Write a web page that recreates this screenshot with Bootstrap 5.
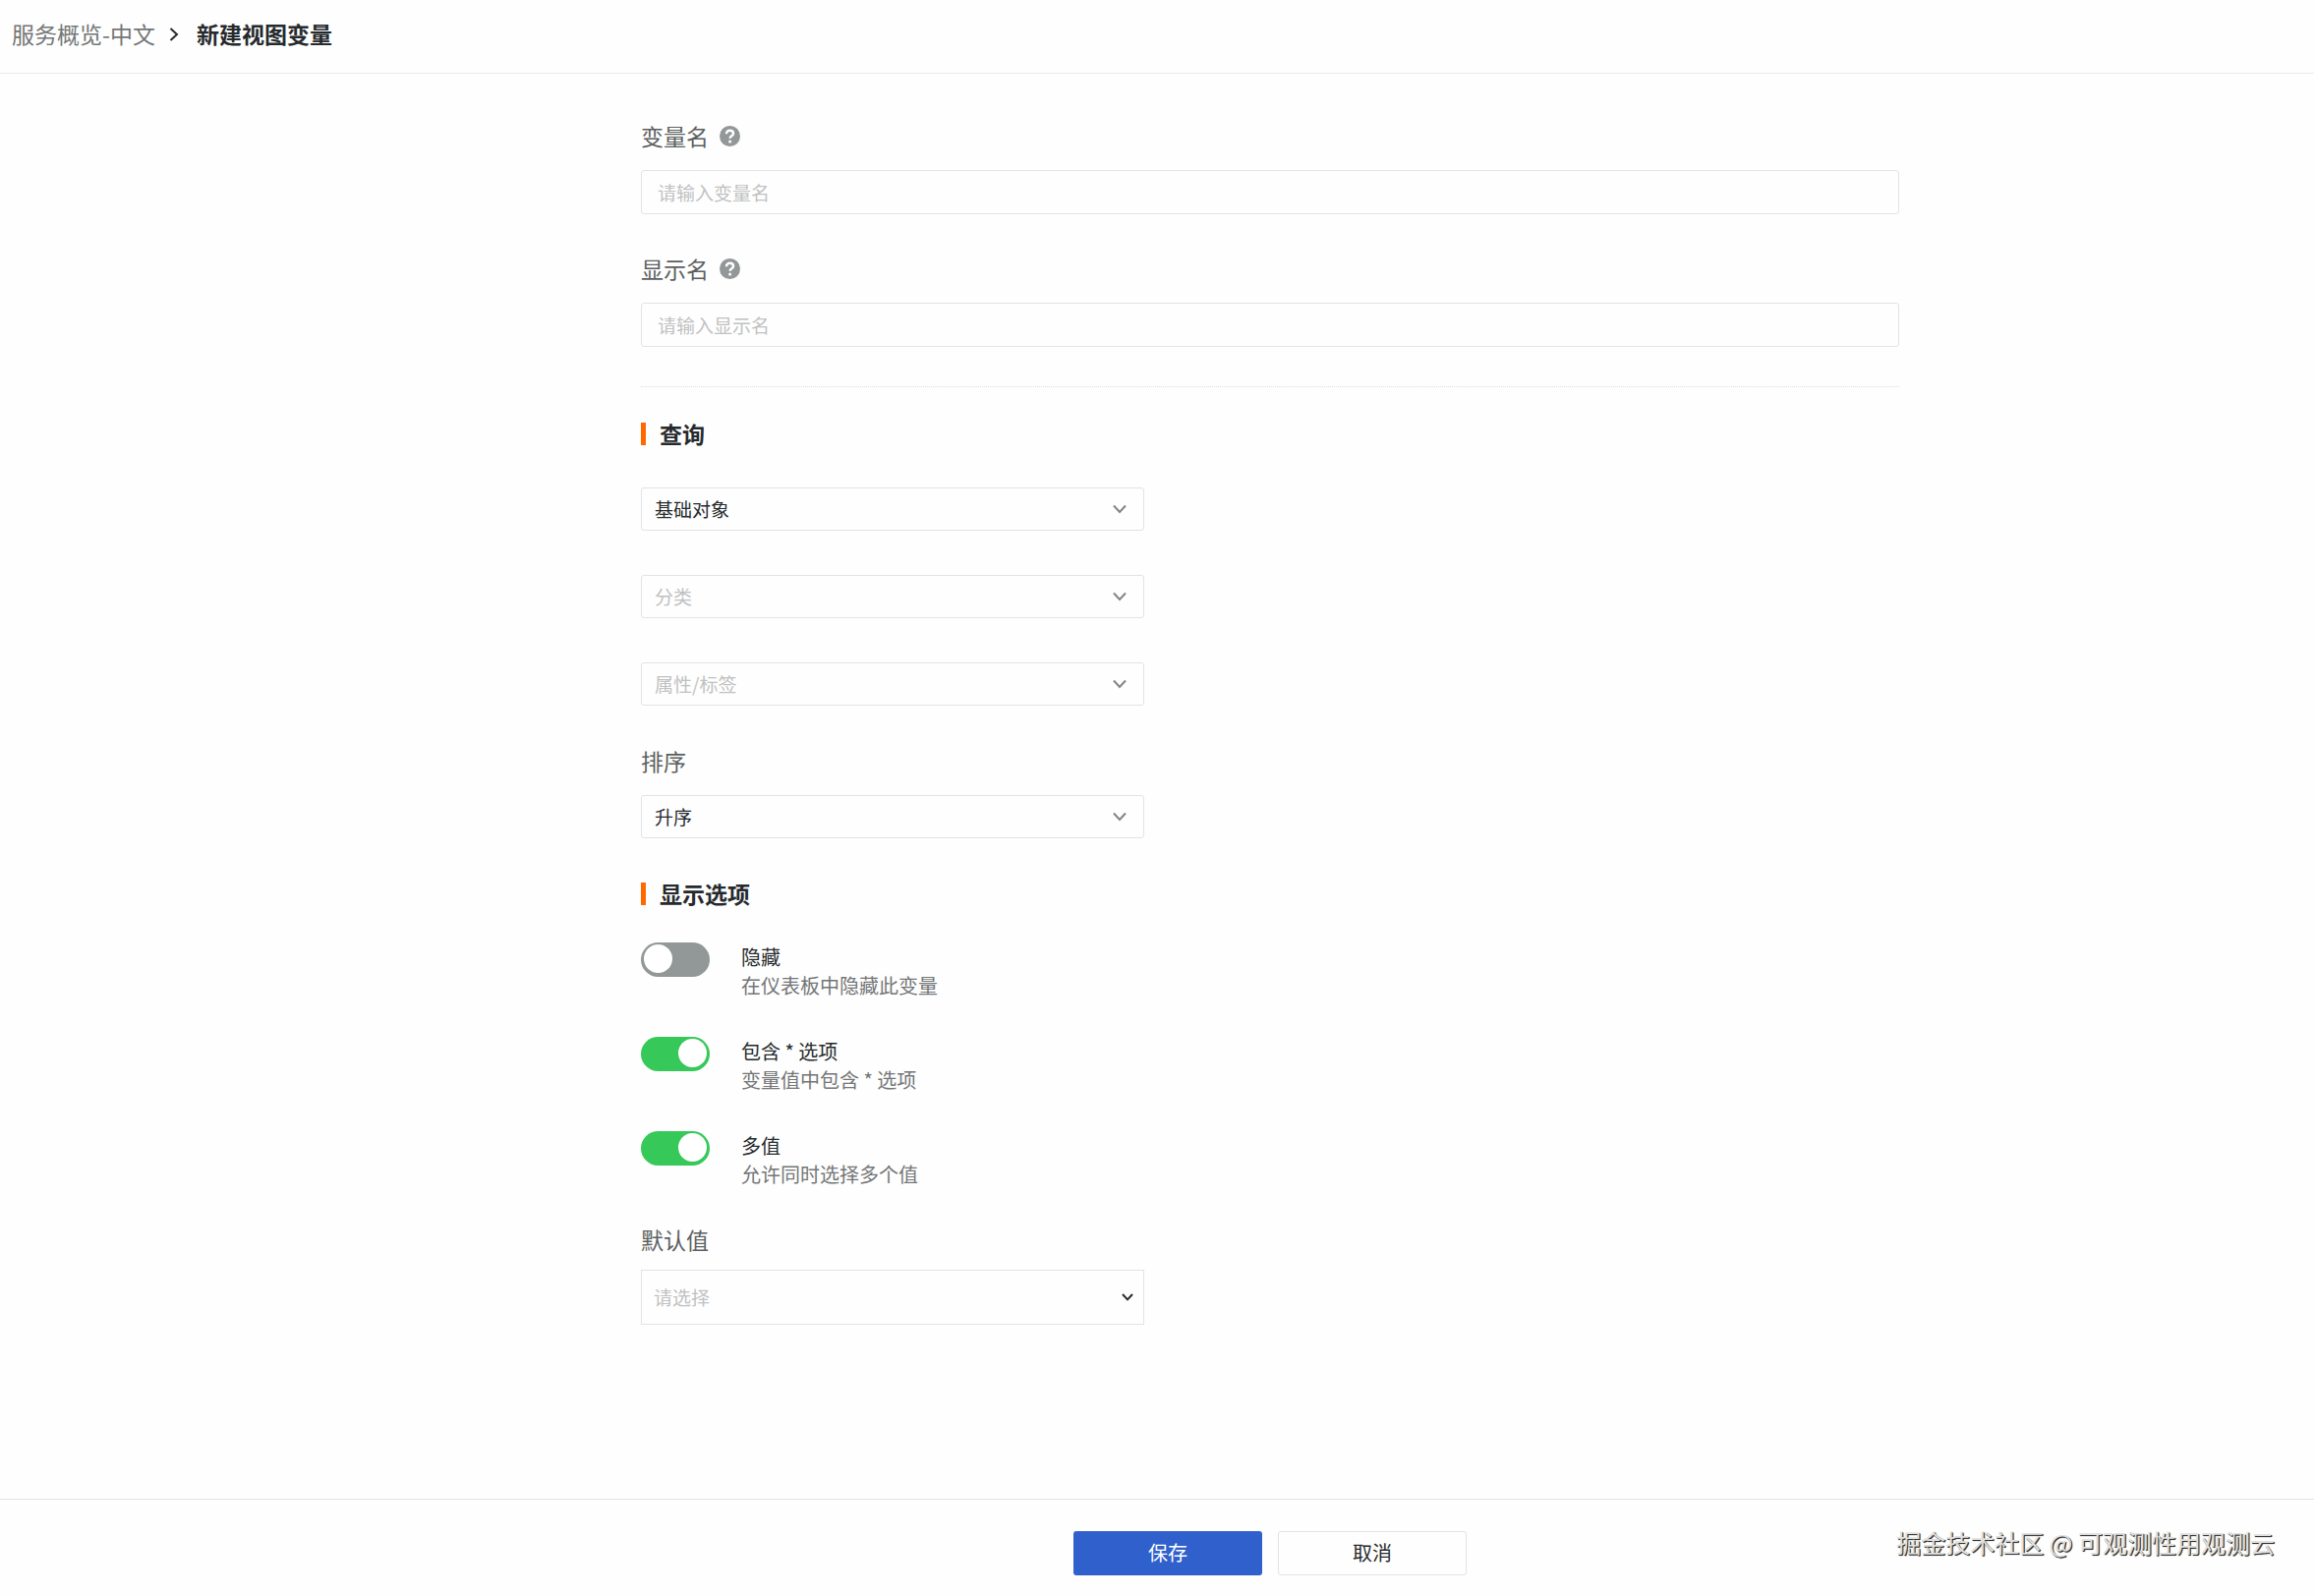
<!DOCTYPE html>
<html lang="zh-CN">
<head>
<meta charset="utf-8">
<meta name="viewport" content="width=device-width, initial-scale=1">
<title>新建视图变量</title>
<link href="https://cdn.jsdelivr.net/npm/bootstrap@5.3.0/dist/css/bootstrap.min.css" rel="stylesheet">
<style>
  :root {
    --ink: #262a2d;
    --label: #5c5f60;
    --muted: #747677;
    --hint: #c0c1c1;
    --line: #e2e3e3;
    --accent: #ff6a00;
  }
  body { font-family: "Noto Sans CJK SC", "Liberation Sans", sans-serif; font-size: 19px; line-height: 29px; color: var(--ink); background: #fefefe; }
  .topbar { height: 75px; padding: 0 12px 6px; border-bottom: 1px solid #ececec; font-size: 23px; }
  .topbar a { color: var(--muted); }
  .topbar h1 { font-size: 23px; line-height: 30px; }
  .crumb-arrow { width: 10px; height: 14px; margin: 2px 18px 0 14px; }
  .shell { padding-left: 230px; }
  .editor { max-width: 1280px; padding-top: 48px; padding-bottom: 40px; }
  .field { margin-bottom: 40px; }
  .field.half { margin-bottom: 41px; }
  .field-label { font-size: 23px; line-height: 30px; color: var(--label); margin-bottom: 20px; }
  .help-icon { width: 21px; height: 21px; margin-left: 11px; }
  .editor .form-control, .editor .form-select { font-size: 19px; line-height: 29px; border: 1px solid var(--line); border-radius: 3px; color: var(--ink); background-color: transparent; }
  .editor .form-control { height: 45px; padding: 6px 16px; }
  .editor .form-control::placeholder { color: var(--hint); opacity: 1; }
  .editor .form-select {
    height: 44px; padding: 5px 40px 7px 13px;
    background-image: url("data:image/svg+xml,%3Csvg xmlns='http://www.w3.org/2000/svg' viewBox='0 0 14 10'%3E%3Cpath d='M1 1.5 7 8 13 1.5' fill='none' stroke='%23838686' stroke-width='2'/%3E%3C/svg%3E");
    background-size: 14px 10px; background-position: right 17px center;
  }
  .editor .form-select:invalid { color: var(--hint); }
  .editor .form-select option { color: var(--ink); }
  .editor .select-tall {
    height: 56px; padding-left: 12px; border-radius: 0;
    background-image: url("data:image/svg+xml,%3Csvg xmlns='http://www.w3.org/2000/svg' viewBox='0 0 12 8'%3E%3Cpath d='M1 1 6 6.4 11 1' fill='none' stroke='%23262a2d' stroke-width='2'/%3E%3C/svg%3E");
    background-size: 12px 8px; background-position: right 10px center;
  }
  .half { width: 40%; }
  .stack { display: grid; gap: 45px; }
  .divider { border-top: 1px dotted #dcdddd; opacity: 1; margin: 0 0 32px; }
  .section-title { font-size: 23px; line-height: 30px; margin-bottom: 40px; }
  .section-title::before { content: ""; width: 5px; height: 23px; margin-right: 14px; background: var(--accent); }
  .section-title.tight { margin-bottom: 35px; }
  .option-list { display: grid; gap: 38px; margin-bottom: 37px; }
  .option-row { gap: 32px; padding: 0; min-height: 0; font-size: 20px; }
  .option-row .form-check-input {
    width: 70px; height: 35px; margin: 0; border: 0; border-radius: 18px; background-color: #929798;
    background-image: url("data:image/svg+xml,%3Csvg xmlns='http://www.w3.org/2000/svg' viewBox='0 0 29 29'%3E%3Ccircle cx='14.5' cy='14.5' r='14.5' fill='%23fff'/%3E%3C/svg%3E");
    background-size: 29px 29px; background-position: 3px 2px;
  }
  .option-row .form-check-input:checked { background-color: #36c95a; background-position: 38px 2px; }
  .option-row small { font-size: 20px; color: var(--muted); }
  .actions { min-height: 99px; border-top: 1px solid var(--line); padding-top: 32px; padding-bottom: 21px; }
  .actions .btn { width: 192px; height: 45px; padding: 0 0 2px; font-size: 20px; line-height: 29px; border-radius: 3px; }
  .btn-save { color: #fff; background: #2f60cc; }
  .btn-save:hover { color: #fff; background: #2853b4; }
  .btn-cancel { color: var(--ink); border: 1px solid var(--line); }
  .credit { right: 40px; top: 28px; font-size: 25px; line-height: 30px; color: #e0e0e0; text-shadow: 1px 1px 0 #333, 1px 1px 1px #333; }
</style>
<script src="https://cdn.jsdelivr.net/npm/bootstrap@5.3.0/dist/js/bootstrap.bundle.min.js"></script>
</head>
<body class="d-flex flex-column min-vh-100">

<header class="topbar d-flex align-items-center">
  <a href="#" class="text-decoration-none">服务概览-中文</a>
  <svg class="crumb-arrow" viewBox="0 0 10 14" aria-hidden="true"><path d="M1.500 1 8 7l-6.500 6" fill="none" stroke="#262a2d" stroke-width="2"/></svg>
  <h1 class="fw-bold m-0">新建视图变量</h1>
</header>

<main class="shell flex-grow-1">
  <form id="variable-form" class="editor mx-auto">
    <div class="field">
      <label class="field-label d-flex align-items-center" for="var-name">变量名
        <svg class="help-icon" viewBox="0 0 21 21" aria-hidden="true"><circle cx="10.500" cy="10.500" r="10.500" fill="#929798"/><path d="M7 8.200c0-2.100 1.500-3.400 3.500-3.400s3.500 1.200 3.500 3.100c0 2.400-3.400 2.500-3.400 4.900" fill="none" stroke="#fff" stroke-width="2.500"/><circle cx="10.600" cy="15.900" r="1.500" fill="#fff"/></svg>
      </label>
      <input class="form-control" id="var-name" type="text" placeholder="请输入变量名">
    </div>
    <div class="field">
      <label class="field-label d-flex align-items-center" for="display-name">显示名
        <svg class="help-icon" viewBox="0 0 21 21" aria-hidden="true"><circle cx="10.500" cy="10.500" r="10.500" fill="#929798"/><path d="M7 8.200c0-2.100 1.500-3.400 3.500-3.400s3.500 1.200 3.500 3.100c0 2.400-3.400 2.500-3.400 4.900" fill="none" stroke="#fff" stroke-width="2.500"/><circle cx="10.600" cy="15.900" r="1.500" fill="#fff"/></svg>
      </label>
      <input class="form-control" id="display-name" type="text" placeholder="请输入显示名">
    </div>

    <hr class="divider">

    <h2 class="section-title d-flex align-items-center fw-bold">查询</h2>
    <div class="field half stack">
      <select class="form-select" aria-label="数据来源"><option>基础对象</option></select>
      <select class="form-select" aria-label="分类" required><option value="">分类</option></select>
      <select class="form-select" aria-label="属性/标签" required><option value="">属性/标签</option></select>
    </div>
    <div class="field half">
      <label class="field-label d-block" for="sort-order">排序</label>
      <select class="form-select" id="sort-order"><option>升序</option><option>降序</option></select>
    </div>

    <h2 class="section-title tight d-flex align-items-center fw-bold">显示选项</h2>
    <div class="option-list">
      <div class="option-row form-check form-switch d-flex align-items-start mb-0">
        <input class="form-check-input flex-shrink-0" type="checkbox" role="switch" id="opt-hide">
        <label for="opt-hide">隐藏<small class="d-block">在仪表板中隐藏此变量</small></label>
      </div>
      <div class="option-row form-check form-switch d-flex align-items-start mb-0">
        <input class="form-check-input flex-shrink-0" type="checkbox" role="switch" id="opt-all" checked>
        <label for="opt-all">包含 * 选项<small class="d-block">变量值中包含 * 选项</small></label>
      </div>
      <div class="option-row form-check form-switch d-flex align-items-start mb-0">
        <input class="form-check-input flex-shrink-0" type="checkbox" role="switch" id="opt-multi" checked>
        <label for="opt-multi">多值<small class="d-block">允许同时选择多个值</small></label>
      </div>
    </div>

    <div class="half">
      <label class="field-label d-block mb-3" for="default-value">默认值</label>
      <select class="form-select select-tall" id="default-value" required><option value="">请选择</option></select>
    </div>
  </form>
</main>

<footer class="actions shell position-relative d-flex justify-content-center gap-3">
  <button type="submit" form="variable-form" class="btn btn-save">保存</button>
  <button type="button" class="btn btn-cancel">取消</button>
  <span class="credit position-absolute">掘金技术社区 @ 可观测性用观测云</span>
</footer>
</body>
</html>
